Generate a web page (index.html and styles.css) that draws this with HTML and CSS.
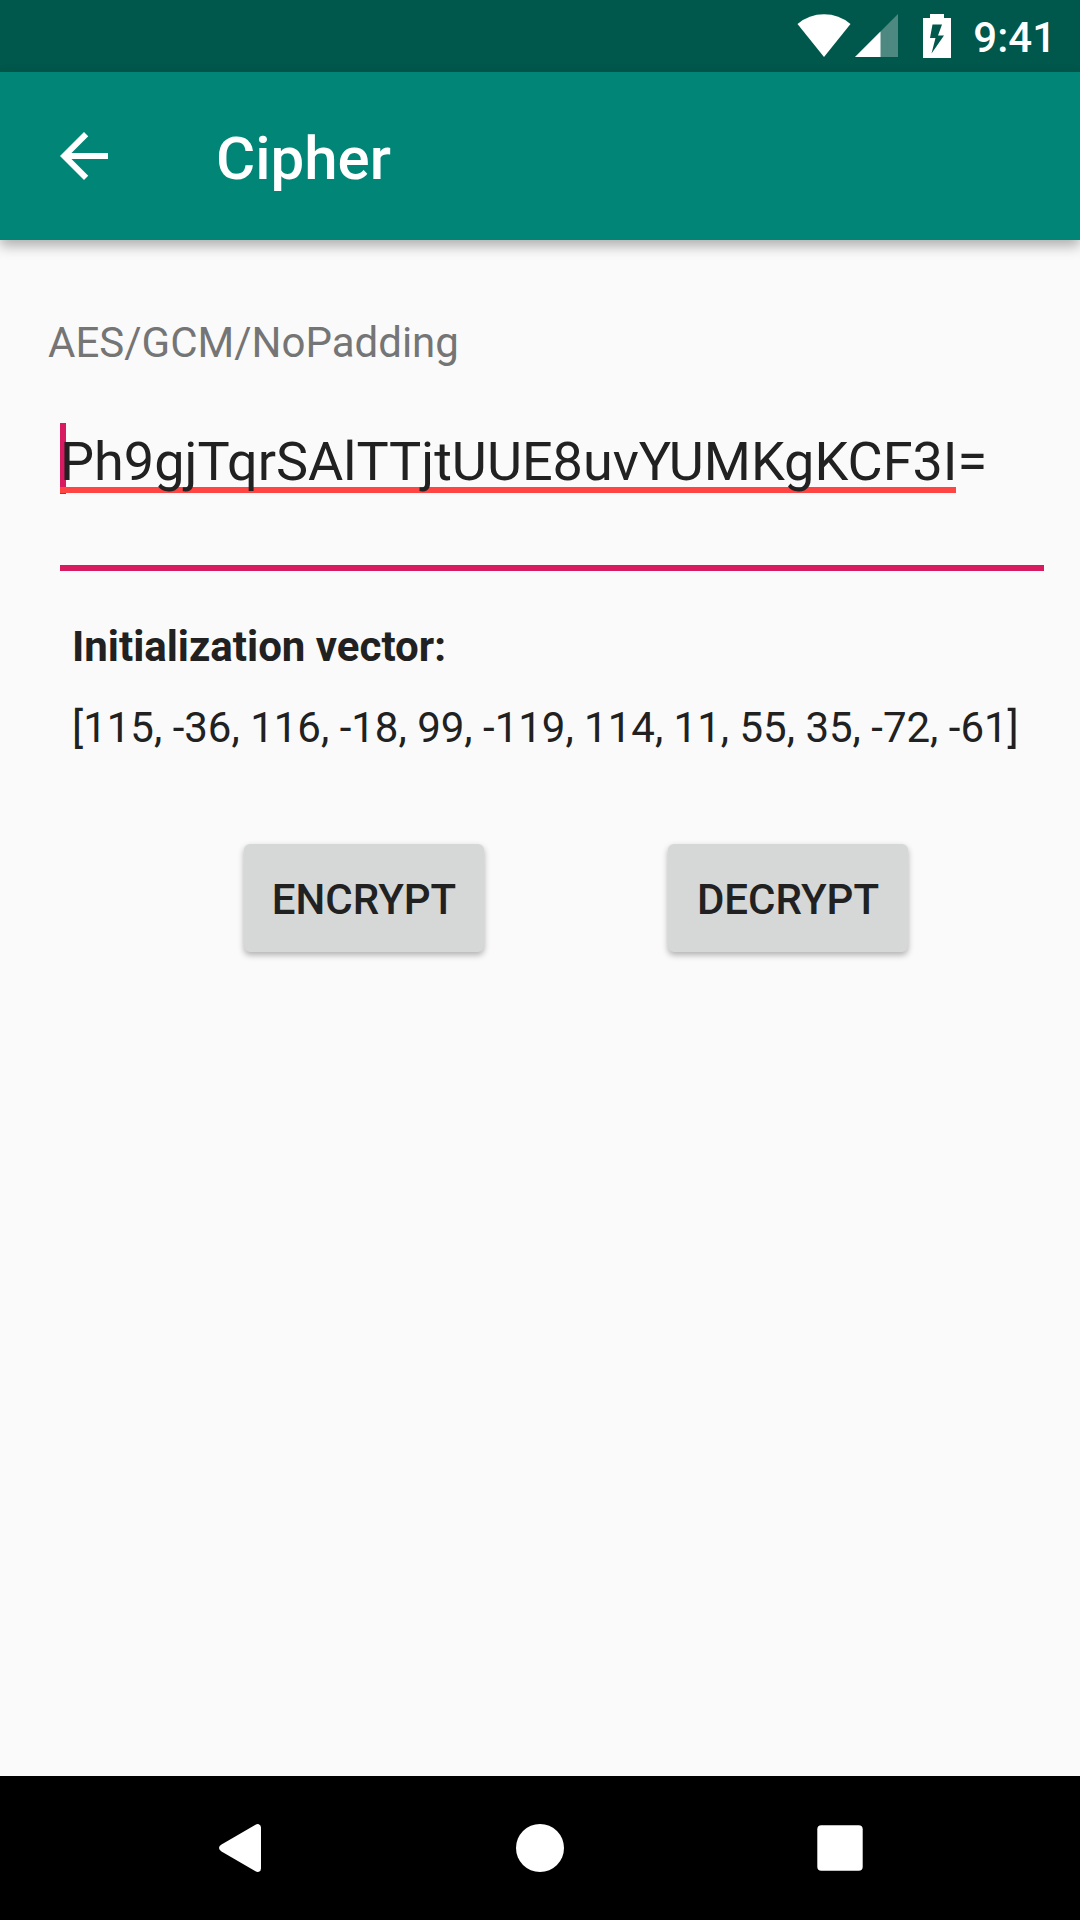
FILE: index.html
```html
<!DOCTYPE html>
<html lang="en">
<head>
  <meta charset="utf-8">
  <meta name="viewport" content="width=device-width, initial-scale=1">
  <title>Cipher</title>
  <link rel="stylesheet" href="styles.css">
</head>
<body>
  <div class="status-bar">
    <svg class="status-wifi" width="54" height="44" viewBox="0 0 54 44" role="img" aria-label="Wi-Fi">
      <path d="M0.5 10Q12 0.3 27 0.3T53.5 10L27 43Z" fill="#fff"/>
    </svg>
    <svg class="status-signal" width="43" height="44" viewBox="0 0 43 44" role="img" aria-label="Mobile signal">
      <path d="M43 0V43H0Z" fill="#fff" fill-opacity=".3"/>
      <path d="M25.5 17.5V43H0Z" fill="#fff"/>
    </svg>
    <svg class="status-battery" width="28" height="44" viewBox="0 0 28 44" role="img" aria-label="Battery charging">
      <path fill-rule="evenodd" d="M7 0H21V4H28V44H0V4H7ZM9.5 10.5L7 24H12.5L8.5 39.5L21 21.5H15L19 10.5Z" fill="#fff"/>
    </svg>
    <span class="clock">9:41</span>
  </div>

  <header class="app-bar">
    <button class="back" type="button" aria-label="Back">
      <svg width="72" height="72" viewBox="0 0 24 24" aria-hidden="true">
        <path d="M20 11H7.83L13.42 5.41 12 4l-8 8 8 8 1.41-1.41L7.83 13H20z" fill="#fff"/>
      </svg>
    </button>
    <h1 class="title">Cipher</h1>
  </header>

  <main class="content">
    <label class="algorithm" for="cipher-text">AES/GCM/NoPadding</label>
    <input class="cipher-text" id="cipher-text" type="text" spellcheck="false" autocomplete="off" value="Ph9gjTqrSAlTTjtUUE8uvYUMKgKCF3I=">
    <section class="vector">
      <h2 class="vector-title">Initialization vector:</h2>
      <p class="vector-value">[115, -36, 116, -18, 99, -119, 114, 11, 55, 35, -72, -61]</p>
    </section>
    <div class="actions">
      <button class="action" type="button">ENCRYPT</button>
      <button class="action" type="button">DECRYPT</button>
    </div>
  </main>

  <nav class="nav-bar" aria-label="System">
    <button class="nav-button" type="button" aria-label="Back">
      <svg width="48" height="48" viewBox="0 0 48 48" aria-hidden="true">
        <path d="M39.500 0.800Q41 -0.200 42.800 0.200Q45 0.900 45 3.500V44.500Q45 47.100 42.800 47.800Q41 48.200 39.500 47.200L5.500 27.400Q3 26 3 24T5.500 20.600Z" fill="#fff"/>
      </svg>
    </button>
    <button class="nav-button" type="button" aria-label="Home">
      <svg width="48" height="48" viewBox="0 0 48 48" aria-hidden="true">
        <circle cx="24" cy="24" r="24" fill="#fff"/>
      </svg>
    </button>
    <button class="nav-button" type="button" aria-label="Overview">
      <svg width="48" height="48" viewBox="0 0 48 48" aria-hidden="true">
        <rect x="1.3" y="1.3" width="45.4" height="45.4" rx="4" fill="#fff"/>
      </svg>
    </button>
  </nav>
</body>
</html>
```
FILE: styles.css
```css
* {
  box-sizing: border-box;
}

body {
  margin: 0;
  min-height: 100vh;
  display: flex;
  flex-direction: column;
  background: #fafafa;
  color: #212121;
  font-family: Roboto, "Liberation Sans", sans-serif;
  font-size: 42px;
  line-height: 50px;
}

button {
  margin: 0;
  padding: 0;
  border: 0;
  background: none;
  font: inherit;
  color: inherit;
}

svg {
  display: block;
}

.status-bar {
  display: flex;
  justify-content: flex-end;
  align-items: center;
  height: 72px;
  padding-right: 24px;
  background: #00574b;
  color: #fff;
}

.status-signal {
  margin-left: 4px;
}

.status-battery {
  margin-left: 25px;
}

.clock {
  margin-left: 22px;
  padding-top: 4px;
  font-weight: 500;
}

.app-bar {
  display: flex;
  align-items: center;
  gap: 96px;
  height: 168px;
  padding: 0 48px;
  background: #008577;
  color: #fff;
  box-shadow: 0 6px 12px rgba(0, 0, 0, 0.3);
}

.title {
  margin: 0;
  padding-top: 6px;
  font-size: 60px;
  font-weight: 500;
  line-height: 72px;
}

.content {
  flex: 1;
  display: flex;
  flex-direction: column;
  padding-top: 78px;
}

.algorithm {
  margin-left: 48px;
  color: #757575;
}

/* Field with the text cursor at its start and a spell-check line under the first word */
.cipher-text {
  margin: 42px 36px 0 60px;
  padding: 16px 0 67px;
  border: 0;
  border-bottom: 6px solid #d81b60;
  border-radius: 0;
  outline: 0;
  background:
    linear-gradient(#ff4444, #ff4444) 0 77px / 896px 6px no-repeat,
    linear-gradient(#d81b60, #d81b60) 0 13px / 6px 71px no-repeat;
  color: #212121;
  font-family: inherit;
  font-size: 54px;
  line-height: 72px;
}

.vector {
  display: flex;
  flex-direction: column;
  gap: 31px;
  padding: 51px 36px 0 72px;
}

.vector-title,
.vector-value {
  margin: 0;
  font-size: 42px;
  line-height: 50px;
}

.vector-title {
  font-weight: 700;
}

.actions {
  display: flex;
  justify-content: center;
  gap: 184px;
  padding: 91px 0 0 72px;
}

.action {
  width: 240px;
  height: 108px;
  padding-top: 4px;
  border-radius: 6px;
  background: #d6d7d7;
  box-shadow: 0 3px 6px rgba(0, 0, 0, 0.3);
  font-weight: 500;
}

.nav-bar {
  display: flex;
  justify-content: center;
  height: 144px;
  background: #000;
}

.nav-button {
  width: 300px;
  display: flex;
  justify-content: center;
  align-items: center;
}
```
